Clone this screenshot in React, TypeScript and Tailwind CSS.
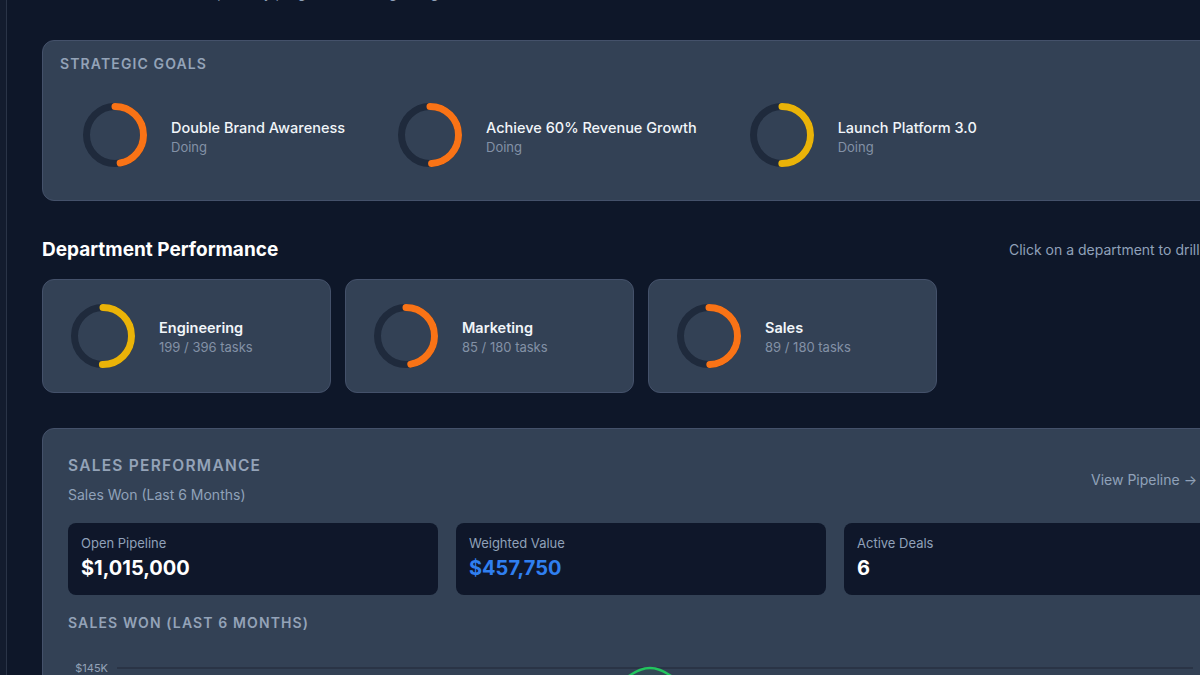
import React from 'react'

type Ring = { pct: number; color: string }

function Donut({ pct, color }: Ring) {
  const r = 28.5
  const c = 2 * Math.PI * r
  return (
    <svg width="64" height="64" viewBox="0 0 64 64" className="shrink-0 -rotate-90">
      <circle cx="32" cy="32" r={r} fill="none" stroke="#1f2a3c" strokeWidth="7" />
      <circle
        cx="32"
        cy="32"
        r={r}
        fill="none"
        stroke={color}
        strokeWidth="7"
        strokeLinecap="round"
        strokeDasharray={`${(pct / 100) * c} ${c}`}
      />
    </svg>
  )
}

const ORANGE = '#f97316'
const YELLOW = '#eab308'

const goals = [
  { title: 'Double Brand Awareness', pct: 47, color: ORANGE },
  { title: 'Achieve 60% Revenue Growth', pct: 49, color: ORANGE },
  { title: 'Launch Platform 3.0', pct: 50, color: YELLOW },
]

const departments = [
  { name: 'Engineering', done: 199, total: 396, color: YELLOW },
  { name: 'Marketing', done: 85, total: 180, color: ORANGE },
  { name: 'Sales', done: 89, total: 180, color: ORANGE },
]

const stats = [
  { label: 'Open Pipeline', value: '$1,015,000', tone: 'text-white' },
  { label: 'Weighted Value', value: '$457,750', tone: 'text-[#2f7ff0]' },
  { label: 'Active Deals', value: '6', tone: 'text-white' },
]

export default function App() {
  return (
    <div
      className="flex h-[675px] w-[1200px] overflow-hidden bg-[#0e1729] text-white"
      style={{ fontFamily: 'Inter, "Noto Sans", sans-serif' }}
    >
      {/* sidebar edge */}
      <div className="w-[7px] shrink-0 border-r border-[#2a3447] bg-[#131c2e]" />

      <main className="w-[1233px] shrink-0 pl-[35px]">
        <p className="-mt-[17px] h-5 pl-[165px] text-sm leading-5 text-slate-400">
          (quarterly progress &amp; strategic targets)
        </p>

        {/* Strategic goals */}
        <section className="mt-[37px] rounded-xl border border-[#44516a] bg-[#334155] px-[17px] pb-[17px] pt-[13px]">
          <h3 className="h-5 text-sm font-semibold leading-5 tracking-[0.08em] text-[#94a3b8]">STRATEGIC GOALS</h3>
          <div className="mt-[13px] flex gap-[53px] pl-[23px]">
            {goals.map((g) => (
              <div key={g.title} className="flex items-center gap-6 py-4">
                <Donut pct={g.pct} color={g.color} />
                <div className="pt-1">
                  <p className="text-[14.5px] font-medium leading-5 text-slate-100">{g.title}</p>
                  <p className="text-[13px] leading-[18px] text-[#8391a6]">Doing</p>
                </div>
              </div>
            ))}
          </div>
        </section>

        {/* Department performance */}
        <div className="mt-[35px] flex h-7 items-center justify-between">
          <h2 className="text-[19px] font-bold text-white">Department Performance</h2>
          <span className="text-sm text-slate-400">Click on a department to drill down</span>
        </div>
        <div className="mt-[15px] grid grid-cols-4 gap-[14px]">
          {departments.map((d) => (
            <div
              key={d.name}
              className="flex items-center gap-6 rounded-xl border border-[#44516a] bg-[#334155] px-7 py-6"
            >
              <Donut pct={(d.done / d.total) * 100} color={d.color} />
              <div className="pt-0.5">
                <p className="text-[14.5px] font-semibold leading-5 text-slate-100">{d.name}</p>
                <p className="text-[13px] leading-[18px] text-[#8391a6]">
                  {d.done} / {d.total} tasks
                </p>
              </div>
            </div>
          ))}
        </div>

        {/* Sales performance */}
        <section className="mt-[35px] rounded-xl border border-[#44516a] bg-[#334155] p-[25px]">
          <div className="flex items-center justify-between">
            <div>
              <h3 className="text-[15.5px] font-semibold leading-6 tracking-[0.08em] text-[#94a3b8]">SALES PERFORMANCE</h3>
              <p className="mt-[7px] text-sm leading-5 text-slate-400">Sales Won (Last 6 Months)</p>
            </div>
            <span className="pr-[17px] text-sm text-slate-400">View Pipeline →</span>
          </div>

          <div className="mt-[18px] grid grid-cols-3 gap-[18px]">
            {stats.map((s) => (
              <div key={s.label} className="rounded-lg bg-[#0f172a] px-[13px] pb-[13px] pt-[11px]">
                <p className="text-[13px] leading-[18px] text-slate-400">{s.label}</p>
                <p className={`mt-0.5 text-xl font-bold leading-7 ${s.tone}`}>{s.value}</p>
              </div>
            ))}
          </div>

          <h3 className="mt-[18px] text-sm font-semibold leading-5 tracking-[0.08em] text-[#94a3b8]">
            SALES WON (LAST 6 MONTHS)
          </h3>

          <svg width="1146" height="220" viewBox="0 0 1146 220" className="mt-[19px] block overflow-visible">
            <text x="40" y="20" textAnchor="end" fontSize="11" fill="#94a3b8" fontFamily="Inter, sans-serif">
              $145K
            </text>
            <line x1="49" y1="16" x2="1125" y2="16" stroke="#2a3446" strokeWidth="2" />
            <path
              d="M 420 160 C 500 120, 540 16, 582 16 C 624 16, 664 120, 740 160 L 740 220 L 420 220 Z"
              fill="#22c55e"
              fillOpacity="0.08"
            />
            <path
              d="M 420 160 C 500 120, 540 16, 582 16 C 624 16, 664 120, 740 160"
              fill="none"
              stroke="#22c55e"
              strokeWidth="2.5"
            />
          </svg>
        </section>
      </main>
    </div>
  )
}
